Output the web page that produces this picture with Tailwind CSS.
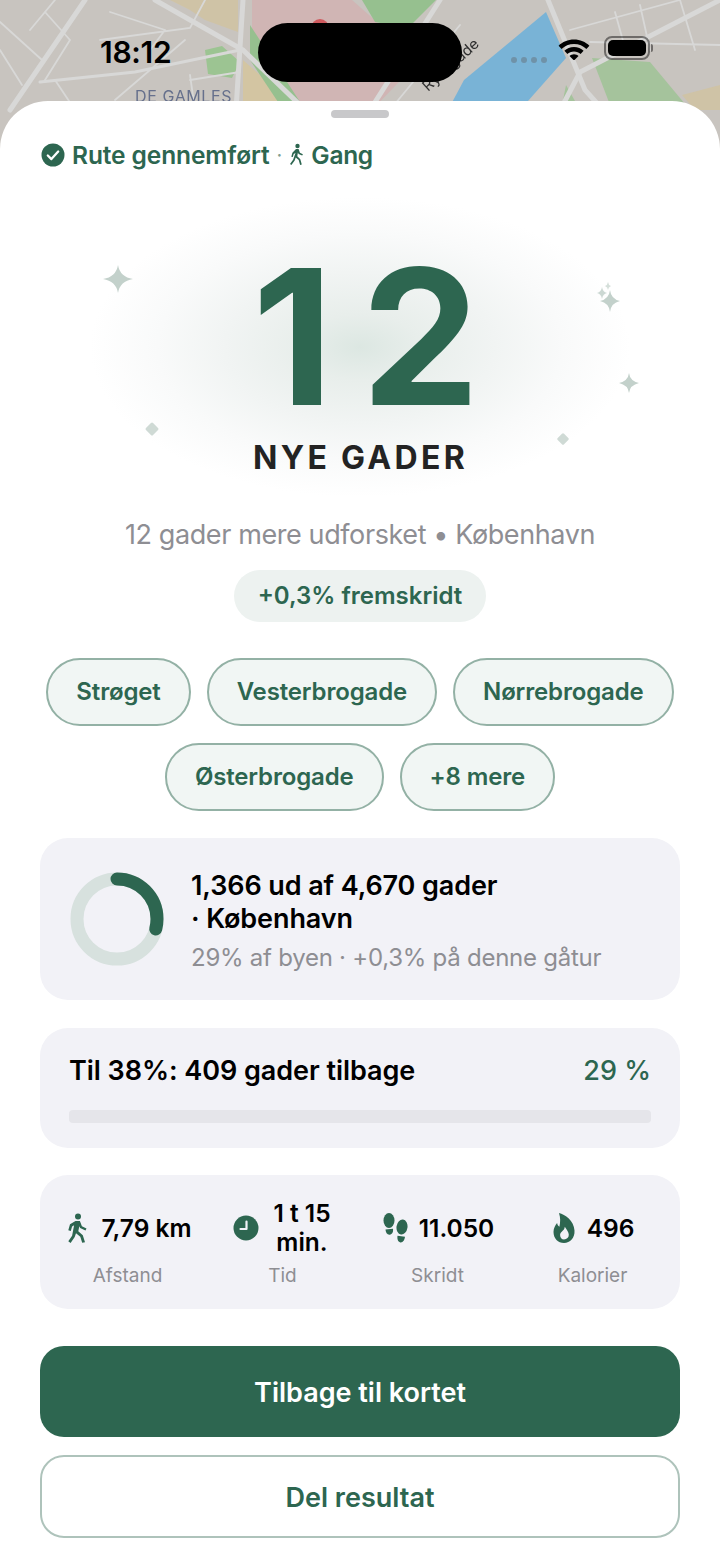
<!DOCTYPE html>
<html lang="da">
<head>
    <meta charset="UTF-8">
    <meta name="viewport" content="width=device-width, initial-scale=1.0">
    <title>Rute gennemført</title>
    <script src="https://cdn.jsdelivr.net/npm/@tailwindcss/browser@4"></script>
</head>
<body class="bg-white font-['Inter',sans-serif]">
    <div class="relative w-[720px] h-[1564px] overflow-hidden">

        <!-- map behind the sheet -->
        <svg class="absolute left-0 top-0 blur-[0.5px]" width="720" height="170" viewBox="0 0 720 170">
            <rect width="720" height="170" fill="#c8c4bf"/>
            <polygon points="170,0 238,0 238,32 205,20 190,10" fill="#cfc3a6"/>
            <polygon points="243,60 300,110 243,110" fill="#d3c5a2"/>
            <polygon points="252,0 352,0 420,60 372,110 305,110 252,45" fill="#d0b5b4"/>
            <polygon points="250,25 302,105 280,105 250,60" fill="#96c08f"/>
            <polygon points="362,0 436,0 408,28 375,22" fill="#96c08f"/>
            <polygon points="205,50 222,46 240,62 232,78 208,74" fill="#9cc492"/>
            <polygon points="546,12 566,58 520,110 448,110 464,80" fill="#79b3d6"/>
            <polygon points="592,58 650,62 690,110 612,110" fill="#a5c39c"/>
            <polygon points="566,85 575,101 562,105" fill="#a5c39c"/>
            <polygon points="682,95 720,85 720,110 695,110" fill="#cfc3a6"/>
            <circle cx="320" cy="28" r="9" fill="#cf5a5e"/>
            <g fill="none" stroke="#d8d8d7" stroke-linecap="round">
                <path stroke-width="5" d="M85 0 L10 110"/>
                <path stroke-width="5" d="M155 0 L243 50 L300 105"/>
                <path stroke-width="5" d="M243 0 L236 110"/>
                <path stroke-width="3" d="M40 82 L135 72 L240 50"/>
                <path stroke-width="5" d="M548 0 L585 90 L612 120"/>
                <path stroke-width="5" d="M720 0 L580 72 L555 120"/>
                <path stroke-width="5" d="M440 0 L370 110"/>
                <path stroke-width="1.800" d="M0 22 L42 60 M0 50 L22 85 M30 30 L55 0 M45 12 L70 40 M70 40 L45 80 M55 80 L75 110"/>
                <path stroke-width="1.800" d="M100 40 L190 28 L205 0 M110 12 L165 30 M165 30 L150 50 M185 40 L115 100"/>
                <path stroke-width="1.800" d="M570 30 L680 0 M590 42 L720 45 M640 5 L650 50 M680 0 L695 50 M615 12 L625 48"/>
                <path stroke-width="1.800" d="M190 80 L240 72 M190 75 L195 110 M460 25 L390 110"/>
            </g>
            <text x="135" y="102" font-family="Inter" font-size="16" letter-spacing="0.6" fill="#66708c">DE GAMLES</text>
            <text transform="translate(428 92) rotate(-42)" font-family="Inter" font-size="15" fill="#2f2f2f">Ryesgade</text>
            <g fill="#6f92a8"><circle cx="514" cy="60" r="3"/><circle cx="524" cy="60" r="3"/><circle cx="534" cy="60" r="3"/><circle cx="544" cy="60" r="3"/></g>
        </svg>

        <!-- status bar -->
        <div class="relative h-[101px] flex items-start justify-between pt-[35px] pl-[100px] pr-[67px]">
            <span class="text-[30px] leading-[35px] font-semibold text-black tracking-[-0.3px]">18:12</span>
            <div class="flex items-center gap-[14px] pt-[1px]">
                <svg width="32" height="24" viewBox="0 0 32 24" fill="#000">
                    <path d="M16 3.500C9.900 3.500 4.400 5.900.6 9.700l3 3.300C6.700 9.900 11.100 8 16 8s9.300 1.900 12.400 5l3-3.300C27.600 5.900 22.100 3.500 16 3.500z"/>
                    <path d="M16 11c-3.800 0-7.200 1.500-9.600 3.800l3 3.300C11 16.600 13.400 15.500 16 15.500s5 1.100 6.600 2.600l3-3.300C23.200 12.500 19.800 11 16 11z"/>
                    <path d="M16 18.200c-1.800 0-3.400.7-4.500 1.800L16 24.500l4.500-4.500c-1.100-1.100-2.700-1.800-4.500-1.800z"/>
                </svg>
                <div class="flex items-center gap-[1px]">
                    <div class="w-[46px] h-[24px] rounded-[8px] border-2 border-black/45 p-[2px]">
                        <div class="w-full h-full rounded-[5px] bg-black"></div>
                    </div>
                    <div class="w-[2px] h-[8px] rounded-r-full bg-black/45"></div>
                </div>
            </div>
        </div>
        <div class="absolute left-[258px] top-[23px] w-[204px] h-[59px] rounded-full bg-black"></div>

        <!-- sheet -->
        <div class="relative bg-white rounded-t-[48px] h-[1463px]">
            <div class="pt-[9px] flex justify-center">
                <div class="w-[58px] h-[8px] rounded-full bg-[#c8c8ca]"></div>
            </div>

            <div class="flex items-center mt-[19px] pl-[41px] h-[36px] text-[#2d6650]">
                <svg width="24" height="24" viewBox="0 0 24 24">
                    <circle cx="12" cy="12" r="11.500" fill="#2d6650"/>
                    <path d="M6.800 12.500l3.600 3.600 6.800-7.600" fill="none" stroke="#fff" stroke-width="2.300" stroke-linecap="round" stroke-linejoin="round"/>
                </svg>
                <span class="ml-[7px] text-[24.500px] font-semibold tracking-[-0.1px]">Rute gennemført</span>
                <span class="mx-[7px] text-[20px] text-[#7f9f92]">·</span>
                <svg width="16" height="24" viewBox="0 0 16 24" fill="#2d6650">
                    <circle cx="8.500" cy="3" r="2.200"/>
                    <path d="M7 6h2.600l1.300 3.800 3 1.500-.7 1.300-3.600-1.700-.7-1.500-.6 3.800 3 3 1.500 5.300-1.700.4-1.400-4.800-3-2.600-1 2.900-3.300 4.600-1.400-1 3.100-4.300L6.500 10l-1.800 1-.9 3.100-1.500-.4 1.100-3.900z"/>
                </svg>
                <span class="ml-[6px] text-[24.500px] font-semibold tracking-[-0.3px]">Gang</span>
            </div>

            <!-- hero number with glow and sparkles -->
            <div class="relative h-[345px] flex flex-col items-center">
                <div class="absolute left-[90px] top-[24px] w-[540px] h-[300px] bg-[radial-gradient(ellipse_closest-side,#dce7e2_0%,#e8eeeb_22%,#f1f4f3_50%,#f9fafa_75%,#ffffff_100%)]"></div>
                <svg class="absolute left-0 top-[15px]" width="720" height="320" viewBox="0 0 720 320" fill="#c3d1cb">
                    <path d="M118 77 Q120 89 133 91 Q120 93 118 105 Q116 93 103 91 Q116 89 118 77z"/>
                    <path d="M610 102 Q611 111 620 113 Q611 115 610 124 Q609 115 600 113 Q609 111 610 102z"/>
                    <path d="M602 99 Q602.700 104 607 105 Q602.700 106 602 111 Q601.300 106 597 105 Q601.300 104 602 99z" opacity="0.85"/>
                    <path d="M608 94 Q608.400 97 611 98 Q608.400 99 608 102 Q607.600 99 605 98 Q607.600 97 608 94z" opacity="0.7"/>
                    <path d="M629 185 Q630 193 639 195 Q630 197 629 205 Q628 197 619 195 Q628 193 629 185z"/>
                    <rect x="147" y="236" width="10" height="10" rx="1.500" transform="rotate(45 152 241)" opacity="0.8"/>
                    <rect x="558.500" y="246.500" width="9" height="9" rx="1.500" transform="rotate(45 563 251)" opacity="0.8"/>
                </svg>
                <div class="relative mt-[95px] h-[137px] text-[188px] leading-[137px] font-bold text-[#2d6650] tracking-[28px] -mr-[28px] pl-[12px]">12</div>
                <div class="relative mt-[33px] h-[40px] text-[32px] leading-[40px] font-bold text-[#232323] tracking-[3.300px] -mr-[1px]">NYE GADER</div>
            </div>

            <p class="text-center text-[27px] leading-[34px] text-[#8e8e93] tracking-[-0.4px]">12 gader mere udforsket • København</p>

            <div class="mt-[18px] flex justify-center">
                <div class="w-[252px] h-[52px] rounded-full bg-[#edf2f0] flex items-center justify-center text-[24px] font-semibold text-[#2d6650]">+0,3% fremskridt</div>
            </div>

            <div class="mt-[36px] flex flex-wrap justify-center gap-x-[16px] gap-y-[17px] px-[40px] tracking-[-0.15px]">
                <div class="h-[68px] px-[28px] rounded-[34px] border-2 border-[#93b1a5] bg-[#f1f6f4] flex items-center text-[24px] font-semibold text-[#2d6650]">Strøget</div>
                <div class="h-[68px] px-[28px] rounded-[34px] border-2 border-[#93b1a5] bg-[#f1f6f4] flex items-center text-[24px] font-semibold text-[#2d6650]">Vesterbrogade</div>
                <div class="h-[68px] px-[28px] rounded-[34px] border-2 border-[#93b1a5] bg-[#f1f6f4] flex items-center text-[24px] font-semibold text-[#2d6650]">Nørrebrogade</div>
                <div class="h-[68px] px-[28px] rounded-[34px] border-2 border-[#93b1a5] bg-[#f1f6f4] flex items-center text-[24px] font-semibold text-[#2d6650]">Østerbrogade</div>
                <div class="h-[68px] px-[28px] rounded-[34px] border-2 border-[#93b1a5] bg-[#f1f6f4] flex items-center text-[24px] font-semibold text-[#2d6650]">+8 mere</div>
            </div>

            <div class="mx-[40px] mt-[27px] flex flex-col">
                <!-- city progress -->
                <div class="h-[162px] rounded-[28px] bg-[#f2f2f7] flex items-center pl-[30px] pr-[20px]">
                    <svg class="shrink-0" width="94" height="94" viewBox="0 0 94 94">
                        <circle cx="47" cy="47" r="40" fill="none" stroke="#d7e1de" stroke-width="13"/>
                        <circle cx="47" cy="47" r="40" fill="none" stroke="#2d6650" stroke-width="13" stroke-linecap="round" pathLength="100" stroke-dasharray="29 100" transform="rotate(-90 47 47)"/>
                    </svg>
                    <div class="ml-[27px] pt-[5px]">
                        <p class="text-[27px] leading-[33px] font-semibold text-black tracking-[-0.1px]">1,366 ud af 4,670 gader<br>· København</p>
                        <p class="mt-[7px] text-[24px] leading-[32px] text-[#8e8e93] tracking-[-0.25px]">29% af byen · +0,3% på denne gåtur</p>
                    </div>
                </div>

                <!-- next goal -->
                <div class="mt-[28px] h-[120px] rounded-[28px] bg-[#f2f2f7] px-[29px] pt-[25px]">
                    <div class="flex items-center justify-between h-[36px]">
                        <span class="text-[27px] font-semibold text-black tracking-[-0.05px]">Til 38%: 409 gader tilbage</span>
                        <span class="text-[27px] font-medium text-[#2d6650]">29 %</span>
                    </div>
                    <div class="mt-[21px] h-[13px] rounded-[4px] bg-[#e5e5ea]"></div>
                </div>

                <!-- stats -->
                <div class="mt-[27px] h-[134px] rounded-[28px] bg-[#f2f2f7] grid grid-cols-4 px-[10px] pt-[24px]">
                    <div class="flex flex-col items-center">
                        <div class="h-[58px] flex items-center gap-[13px] pl-[5px]">
                            <svg width="20" height="30" viewBox="0 0 20 30" fill="#2d6650">
                                <circle cx="10" cy="3.500" r="3"/>
                                <path d="M7.500 8h4.400l2 5.200 4.600 2.300-1 2.100-5.400-2.600-.8-1.800-1 5 4.500 4 2.200 7-2.800.6-1.900-6-4.300-3.600-1.300 3.700-4.100 6-2.300-1.700 3.800-5.400 2-10.600-2 1.200-1.300 4.600-2.500-.7 1.700-6z"/>
                            </svg>
                            <span class="text-[24.500px] font-semibold text-black">7,79 km</span>
                        </div>
                        <span class="mt-[5px] text-[19px] leading-[28px] text-[#8e8e93]">Afstand</span>
                    </div>
                    <div class="flex flex-col items-center">
                        <div class="h-[58px] flex items-center gap-[5px] pl-[8px]">
                            <svg width="26" height="26" viewBox="0 0 26 26">
                                <circle cx="13" cy="13" r="12.500" fill="#2d6650"/>
                                <path d="M13.500 6.500v7.500h-6" fill="none" stroke="#f2f2f7" stroke-width="2.200" stroke-linecap="round" stroke-linejoin="round"/>
                            </svg>
                            <span class="w-[76px] text-center text-[24.500px] leading-[29px] font-semibold text-black">1 t 15 min.</span>
                        </div>
                        <span class="mt-[5px] text-[19px] leading-[28px] text-[#8e8e93]">Tid</span>
                    </div>
                    <div class="flex flex-col items-center">
                        <div class="h-[58px] flex items-center gap-[11px] pl-[2px]">
                            <svg width="25" height="30" viewBox="0 0 25 30" fill="#2d6650">
                                <ellipse cx="6" cy="7.500" rx="5.500" ry="7.500"/>
                                <path d="M2.500 16.500l7.500-.8c.4 3-.7 5.700-3.400 6-2.500.2-3.900-2.300-4.100-5.200z"/>
                                <ellipse cx="19" cy="14" rx="5.500" ry="7.500" transform="rotate(8 19 14)"/>
                                <path d="M14.500 22.800l7.500 1c-.3 3-2 5.900-4.600 5.600-2.600-.3-3.300-3.600-2.900-6.600z"/>
                            </svg>
                            <span class="text-[24.500px] font-semibold text-black">11.050</span>
                        </div>
                        <span class="mt-[5px] text-[19px] leading-[28px] text-[#8e8e93]">Skridt</span>
                    </div>
                    <div class="flex flex-col items-center">
                        <div class="h-[58px] flex items-center gap-[12px] pl-[2px]">
                            <svg width="22" height="30" viewBox="0 0 22 30" fill="#2d6650">
                                <path fill-rule="evenodd" d="M6 0c6 1.500 15 7.500 15.500 17.500C22 25 17 30 11 30S.500 25.500.500 19c0-3.800 1.800-6.700 3.600-9 .3 1.800 1 3 2.300 3.700C7.500 9 7.500 4.500 6 0zM11 26.500c2.900 0 4.800-2 4.800-4.700 0-3-2.300-5-4-8-.3 2.700-1.600 3.500-2.800 4.700-1.100 1-1.900 2-1.900 3.500 0 2.600 1.600 4.500 3.900 4.500z"/>
                            </svg>
                            <span class="text-[24.500px] font-semibold text-black">496</span>
                        </div>
                        <span class="mt-[5px] text-[19px] leading-[28px] text-[#8e8e93]">Kalorier</span>
                    </div>
                </div>
            </div>

            <div class="mx-[40px] mt-[37px] flex flex-col gap-[18px]">
                <button class="h-[91px] rounded-[24px] bg-[#2d6650] pt-[3px] text-white text-[27px] font-semibold">Tilbage til kortet</button>
                <button class="h-[83px] rounded-[24px] border-2 border-[#aec3bb] bg-white pt-[3px] text-[#2d6650] text-[27px] font-semibold">Del resultat</button>
            </div>
        </div>
    </div>
</body>
</html>
